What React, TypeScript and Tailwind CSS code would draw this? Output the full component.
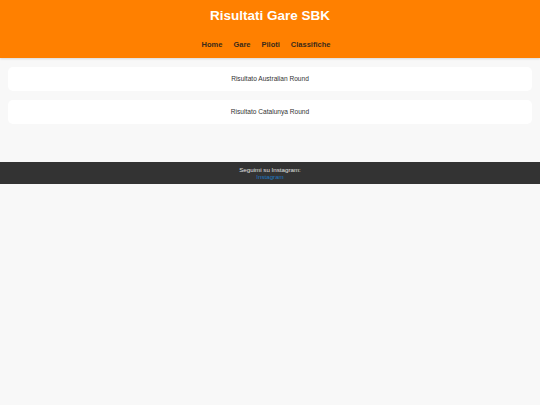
export default function App() {
  const rounds = ["Risultato Australian Round", "Risultato Catalunya Round"];

  return (
    <div
      className="min-h-screen bg-[#f8f8f8]"
      style={{ fontFamily: '"Liberation Sans", Arial, sans-serif' }}
    >
      {/* Header */}
      <header className="h-[58px] bg-[#ff8000] text-center shadow-[0_1px_2px_rgba(0,0,0,0.12)]">
        <h1 className="pt-[7px] text-[13.5px] font-bold leading-[18px] text-white">
          Risultati Gare SBK
        </h1>
        <nav className="mt-[15px] flex justify-center gap-[11px] pr-[8px] text-[7.5px] font-bold leading-[10px] text-[#3a2a1a]">
          <a>Home</a>
          <a>Gare</a>
          <a>Piloti</a>
          <a>Classifiche</a>
        </nav>
      </header>

      {/* Rounds */}
      <main className="flex flex-col gap-[9px] px-[8px] pt-[9px] pb-[38px]">
        {rounds.map((r) => (
          <div
            key={r}
            className="flex h-[24px] items-center justify-center rounded-[5px] bg-white text-[6.6px] text-[#333]"
          >
            {r}
          </div>
        ))}
      </main>

      {/* Footer */}
      <footer className="flex h-[22px] flex-col items-center justify-center bg-[#333] text-[6.2px] leading-[7px] text-[#e0e0e0]">
        <p>Seguimi su Instagram:</p>
        <a className="text-[#1f77c0]">Instagram</a>
      </footer>
    </div>
  );
}
